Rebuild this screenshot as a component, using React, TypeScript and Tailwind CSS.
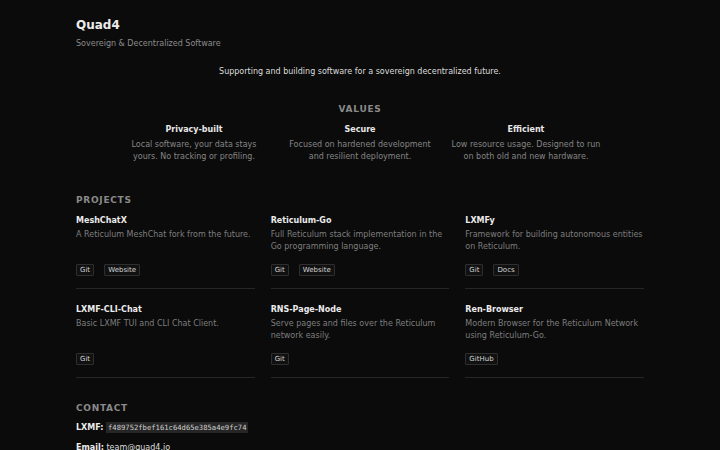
import React from 'react';

const values = [
  { title: 'Privacy-built', text: 'Local software, your data stays yours. No tracking or profiling.' },
  { title: 'Secure', text: 'Focused on hardened development and resilient deployment.' },
  { title: 'Efficient', text: 'Low resource usage. Designed to run on both old and new hardware.' },
];

const projects = [
  { name: 'MeshChatX', desc: 'A Reticulum MeshChat fork from the future.', links: ['Git', 'Website'] },
  { name: 'Reticulum-Go', desc: 'Full Reticulum stack implementation in the Go programming language.', links: ['Git', 'Website'] },
  { name: 'LXMFy', desc: 'Framework for building autonomous entities on Reticulum.', links: ['Git', 'Docs'] },
  { name: 'LXMF-CLI-Chat', desc: 'Basic LXMF TUI and CLI Chat Client.', links: ['Git'] },
  { name: 'RNS-Page-Node', desc: 'Serve pages and files over the Reticulum network easily.', links: ['Git'] },
  { name: 'Ren-Browser', desc: 'Modern Browser for the Reticulum Network using Reticulum-Go.', links: ['GitHub'] },
];

const SectionTitle = ({ children, center }: { children: React.ReactNode; center?: boolean }) => (
  <h2 className={`text-[9px] leading-[14px] font-bold tracking-[0.08em] text-[#8a8a8a] ${center ? 'text-center' : ''}`}>
    {children}
  </h2>
);

export default function App() {
  return (
    <div className="min-h-[450px] bg-[#0b0b0b] text-[#e6e6e6] font-['DejaVu_Sans',sans-serif]">
      <div className="mx-auto w-[568px] pt-4 pb-6">
        <header>
          <h1 className="text-[12px] leading-[18px] font-bold text-[#ececec]">Quad4</h1>
          <p className="mt-1 text-[8px] leading-[12px] text-[#8c8c8c]">Sovereign &amp; Decentralized Software</p>
        </header>

        <p className="mt-4 text-center text-[8px] leading-[12px] text-[#dcdcdc]">
          Supporting and building software for a sovereign decentralized future.
        </p>

        <section className="mt-6">
          <SectionTitle center>VALUES</SectionTitle>
          <div className="mx-auto mt-2 grid w-[482px] grid-cols-3 gap-4">
            {values.map((v) => (
              <div key={v.title} className="text-center">
                <h3 className="text-[8px] leading-[12px] font-bold text-[#e8e8e8]">{v.title}</h3>
                <p className="mt-[3px] text-[8px] leading-[12px] text-[#858585]">{v.text}</p>
              </div>
            ))}
          </div>
        </section>

        <section className="mt-[30px]">
          <SectionTitle>PROJECTS</SectionTitle>
          <div className="mt-2 grid grid-cols-3 gap-x-4 gap-y-[15px]">
            {projects.map((p) => (
              <div key={p.name} className="flex flex-col border-b border-[#262626] pb-3">
                <h3 className="text-[8px] leading-[12px] font-bold text-[#ececec]">{p.name}</h3>
                <p className="mt-[2px] min-h-[24px] text-[8px] leading-[12px] text-[#7e7e7e]">{p.desc}</p>
                <div className="mt-[11px] flex gap-[10px]">
                  {p.links.map((l) => (
                    <span
                      key={l}
                      className="rounded-[1px] border border-[#2e2e2e] bg-[#111111] px-[3px] py-[1px] text-[7px] leading-[8px] text-[#d4d4d4]"
                    >
                      {l}
                    </span>
                  ))}
                </div>
              </div>
            ))}
          </div>
        </section>

        <section className="mt-[23px]">
          <SectionTitle>CONTACT</SectionTitle>
          <p className="mt-[7px] text-[8px] leading-[12px] text-[#dcdcdc]">
            <span className="font-bold text-[#ececec]">LXMF:</span>{' '}
            <code className="bg-[#262626] px-[2px] py-[1px] font-['DejaVu_Sans_Mono',monospace] text-[7.2px] text-[#cfcfcf]">
              f489752fbef161c64d65e385a4e9fc74
            </code>
          </p>
          <p className="mt-2 text-[8px] leading-[12px] text-[#dcdcdc]">
            <span className="font-bold text-[#ececec]">Email:</span> team@quad4.io
          </p>
        </section>
      </div>
    </div>
  );
}
